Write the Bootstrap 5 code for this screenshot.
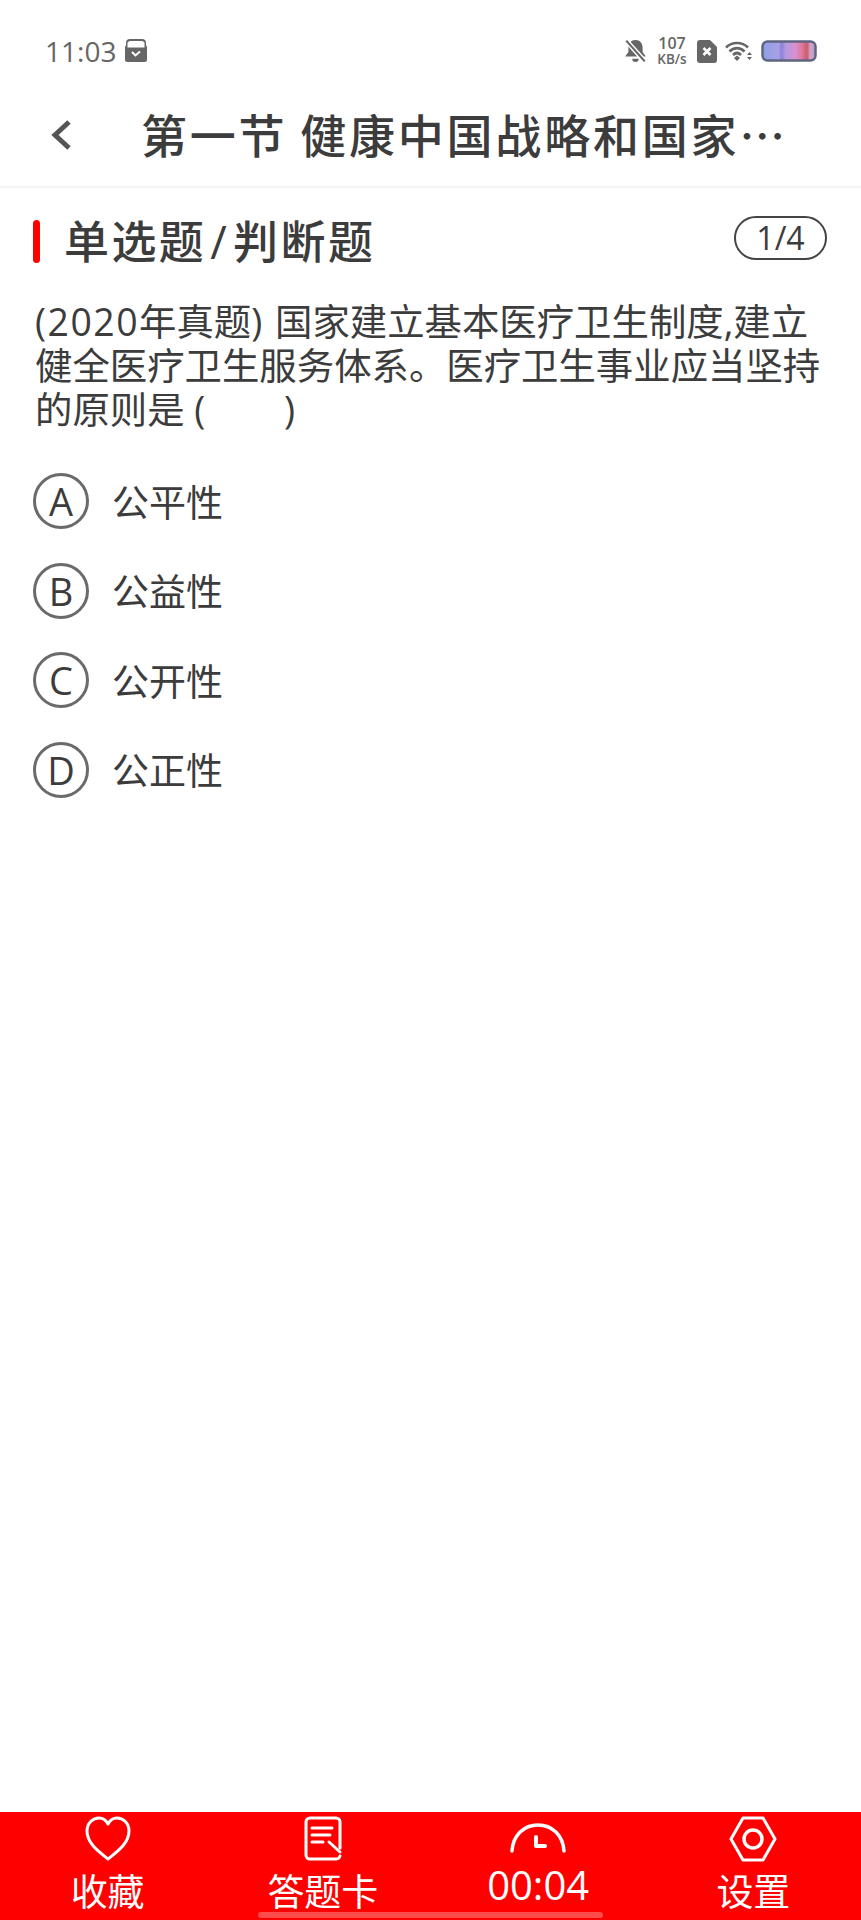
<!DOCTYPE html>
<html lang="zh-CN">
<head>
    <meta charset="UTF-8">
    <meta name="viewport" content="width=device-width, initial-scale=1.0">
    <title>第一节 健康中国战略和国家</title>
    <link rel="stylesheet" href="https://cdn.jsdelivr.net/npm/bootstrap@5.3.0/dist/css/bootstrap.min.css">
    <style>
        html, body { background: #fff; }
        body { font-family: "Open Sans", "Noto Sans CJK SC", sans-serif; color: #3c3c3c; overflow: hidden; }
        .screen { width: 861px; height: 1920px; }
        .status-row { height: 81px; padding: 21px 44px 0 45px; color: #666; }
        .clock-text { font-size: 28px; font-weight: 500; line-height: 1; }
        .speed-text { font-size: 16px; font-weight: 600; line-height: 16px; text-align: center; width: 34px; }
        .speed-text span { display: block; font-size: 13.5px; }
        .title-row { height: 107px; border-bottom: 2px solid #f4f4f4; padding: 3px 0 0 50px; }
        .title-text { font-size: 46px; line-height: 60px; margin-left: 69px; letter-spacing: 2.8px; word-spacing: -2px; white-space: nowrap; font-weight: 500; margin-bottom: 0; }
        .head-row { padding: 28px 34px 0 33px; height: 87px; }
        .red-bar { width: 7px; height: 43px; border-radius: 4px; background: #f00; margin-top: 4px; }
        .head-text { font-size: 45px; line-height: 52px; font-weight: 500; margin: 0 0 0 24px; letter-spacing: 2.4px; }
        .slash-mark { margin: 0 4px; }
        .count-pill { width: 93px; height: 44px; border: 2.5px solid #444; border-radius: 22px; font-size: 32px; line-height: 1; }
        .question-text { font-size: 37.4px; line-height: 44px; margin: 0; padding: 25px 0 0 35px; white-space: nowrap; }
        .year-tag { letter-spacing: 1.5px; }
        .blank-gap { letter-spacing: 2px; }
        .option-list { padding: 41px 0 0 33px; }
        .option-row { height: 56px; margin-bottom: 33.5px; }
        .option-circle { width: 56px; height: 56px; border: 3px solid #6a6a6a; border-radius: 50%; font-size: 38px; line-height: 1; }
        .option-text { font-size: 37px; margin: 2px 0 0 23px; line-height: 1; }
        .foot-bar { height: 108px; background: #f00; color: #fff; }
        .foot-icon { height: 50px; display: block; margin-top: 3px; }
        .foot-label { font-size: 37px; line-height: 44px; margin-top: 5px; }
        .time-label { font-size: 40px; line-height: 44px; margin-top: -2px; }
        .home-line { position: absolute; left: 258px; bottom: 2px; width: 345px; height: 6px; border-radius: 3px; background: rgba(255, 255, 255, .3); }
    </style>
</head>
<body>
    <div class="screen d-flex flex-column">
        <div class="status-row d-flex align-items-center">
            <span class="clock-text">11:03</span>
            <svg class="ms-2" width="24" height="24" viewBox="0 0 24 24">
                <path d="M3 9 V4 a3 3 0 0 1 3-3 h12 a3 3 0 0 1 3 3 v5" fill="none" stroke="#666" stroke-width="2"/>
                <rect x="1" y="6" width="22" height="17" rx="2.5" fill="#666"/>
                <rect x="3.5" y="3.5" width="17" height="5" fill="#fff"/>
                <path d="M8 13 l3.5 3.5 l4.5-4" fill="none" stroke="#fff" stroke-width="2"/>
            </svg>
            <div class="ms-auto d-flex align-items-center">
                <svg width="23" height="24" viewBox="0 0 21 22">
                    <path d="M10.5 1 c4.2 0 6.5 3 6.5 7 v4 l3 4 H1 l3-4 V8 c0-4 2.300-7 6.500-7z M7.500 18 h6 a3 3 0 0 1-6 0z" fill="#666"/>
                    <path d="M2 1.500 L19 20.500" stroke="#fff" stroke-width="4.500"/>
                    <path d="M2 1.500 L19 20.500" stroke="#666" stroke-width="2"/>
                </svg>
                <div class="speed-text ms-2">107<span>KB/s</span></div>
                <svg class="ms-2" width="20" height="23" viewBox="0 0 20 23">
                    <path d="M3 0 H13 L20 7 V20 a3 3 0 0 1-3 3 H3 a3 3 0 0 1-3-3 V3 a3 3 0 0 1 3-3z" fill="#666"/>
                    <path d="M6.500 8 L13.500 15 M13.500 8 L6.500 15" stroke="#fff" stroke-width="2.600"/>
                </svg>
                <svg class="ms-2" width="28" height="22" viewBox="0 0 28 22">
                    <path d="M1 7.500 C7 1.500 17 1.500 23 7.500 M4.500 11.500 C9 7 15 7 19.500 11.500 M8 15 C10.500 12.500 13.500 12.500 16 15" fill="none" stroke="#666" stroke-width="2.600"/>
                    <path d="M9 18 L12 15.500 L15 18 L12 21z" fill="#666"/>
                    <path d="M22 15 l2.500-3 l2.500 3z M22 17 l2.500 3 l2.500-3z" fill="#666"/>
                </svg>
                <svg class="ms-2" width="56" height="22" viewBox="0 0 56 22">
                    <defs>
                        <linearGradient id="batteryFill">
                            <stop offset="0" stop-color="#8c9fe6"/>
                            <stop offset=".3" stop-color="#a9a0e6"/>
                            <stop offset=".36" stop-color="#8f80d8"/>
                            <stop offset=".44" stop-color="#b49ae0"/>
                            <stop offset=".62" stop-color="#d890d0"/>
                            <stop offset=".74" stop-color="#e07a9a"/>
                            <stop offset=".84" stop-color="#c85a70"/>
                            <stop offset=".9" stop-color="#d8a0c0"/>
                            <stop offset="1" stop-color="#a9a4d8"/>
                        </linearGradient>
                    </defs>
                    <rect x="1.500" y="1.500" width="53" height="19" rx="5" fill="url(#batteryFill)" stroke="#5f6580" stroke-width="2.500"/>
                </svg>
            </div>
        </div>

        <div class="title-row d-flex align-items-center">
            <svg width="22" height="32" viewBox="0 0 22 32">
                <path d="M19 3 L5 16 L19 29" fill="none" stroke="#555" stroke-width="5"/>
            </svg>
            <h1 class="title-text">第一节 健康中国战略和国家⋯</h1>
        </div>

        <div class="flex-grow-1">
            <div class="head-row d-flex align-items-start">
                <div class="red-bar"></div>
                <h2 class="head-text">单选题<span class="slash-mark">/</span>判断题</h2>
                <div class="count-pill ms-auto d-flex align-items-center justify-content-center">1/4</div>
            </div>
            <p class="question-text"><span class="year-tag">(2020</span>年真题<span class="year-tag">) </span>国家建立基本医疗卫生制度,建立<br>健全医疗卫生服务体系。医疗卫生事业应当坚持<br>的原则是 (<span class="blank-gap">　　</span>)</p>
            <div class="option-list">
                <div class="option-row d-flex align-items-center">
                    <div class="option-circle d-flex align-items-center justify-content-center">A</div>
                    <div class="option-text">公平性</div>
                </div>
                <div class="option-row d-flex align-items-center">
                    <div class="option-circle d-flex align-items-center justify-content-center">B</div>
                    <div class="option-text">公益性</div>
                </div>
                <div class="option-row d-flex align-items-center">
                    <div class="option-circle d-flex align-items-center justify-content-center">C</div>
                    <div class="option-text">公开性</div>
                </div>
                <div class="option-row d-flex align-items-center">
                    <div class="option-circle d-flex align-items-center justify-content-center">D</div>
                    <div class="option-text">公正性</div>
                </div>
            </div>
        </div>

        <div class="foot-bar position-relative row g-0 text-center">
            <div class="col-3 d-flex flex-column align-items-center">
                <svg class="foot-icon" width="48" height="50" viewBox="0 0 48 50">
                    <path d="M24 44 C14 36 3 28 3 16 C3 8 9 3 15 3 C19 3 22 5 24 9 C26 5 29 3 33 3 C39 3 45 8 45 16 C45 28 34 36 24 44z" fill="none" stroke="#fff" stroke-width="3" stroke-linejoin="round"/>
                </svg>
                <div class="foot-label">收藏</div>
            </div>
            <div class="col-3 d-flex flex-column align-items-center">
                <svg class="foot-icon" width="48" height="50" viewBox="0 0 48 50">
                    <path d="M41 33 V7 a4 4 0 0 0-4-4 H11 a4 4 0 0 0-4 4 V40 a4 4 0 0 0 4 4 H37 a4 4 0 0 0 4-3" fill="none" stroke="#fff" stroke-width="3" stroke-linecap="round"/>
                    <path d="M13 13 H33 M13 20 H31 M13 27 H24 M30 27 L41 37" fill="none" stroke="#fff" stroke-width="3" stroke-linecap="round"/>
                </svg>
                <div class="foot-label">答题卡</div>
            </div>
            <div class="col-3 d-flex flex-column align-items-center">
                <svg class="foot-icon" width="58" height="50" viewBox="0 0 58 50">
                    <path d="M3 36 C4 20 15 10 29 10 C43 10 54 20 55 36" fill="none" stroke="#fff" stroke-width="3.500" stroke-linecap="round"/>
                    <path d="M27 22 V31 H36" fill="none" stroke="#fff" stroke-width="4" stroke-linecap="round" stroke-linejoin="round"/>
                </svg>
                <div class="time-label">00:04</div>
            </div>
            <div class="col-3 d-flex flex-column align-items-center">
                <svg class="foot-icon" width="48" height="50" viewBox="0 0 48 50">
                    <path d="M14 3 H34 L46 24 L34 45 H14 L2 24z" fill="none" stroke="#fff" stroke-width="3" stroke-linejoin="round"/>
                    <circle cx="24" cy="24" r="9" fill="none" stroke="#fff" stroke-width="3.500"/>
                </svg>
                <div class="foot-label">设置</div>
            </div>
            <div class="home-line"></div>
        </div>
    </div>
    <script src="https://cdn.jsdelivr.net/npm/bootstrap@5.3.0/dist/js/bootstrap.bundle.min.js"></script>
</body>
</html>
